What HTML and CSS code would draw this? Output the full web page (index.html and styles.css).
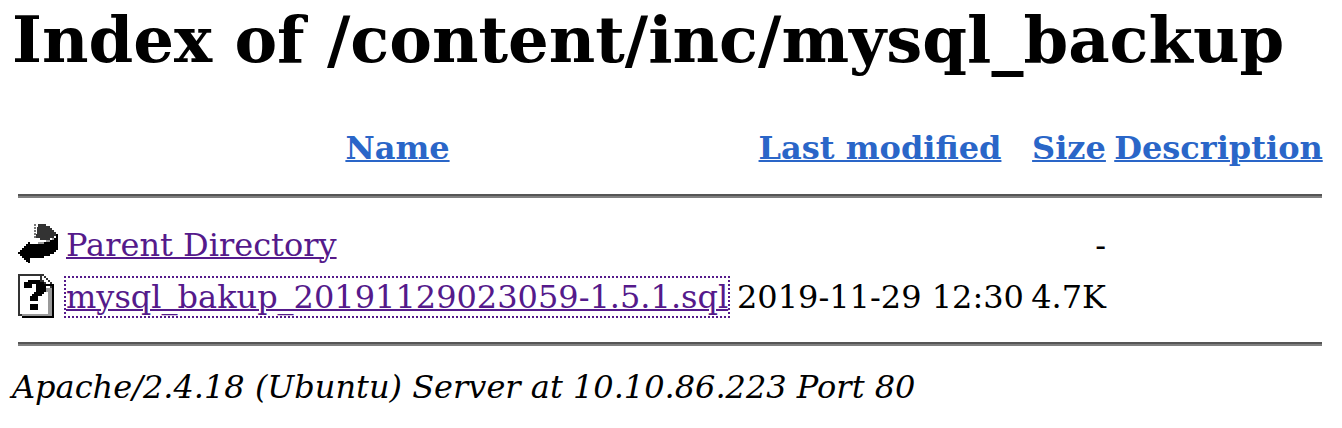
FILE: index.html
```html
<!DOCTYPE html>
<html lang="en">
<head>
<meta charset="utf-8">
<title>Index of /content/inc/mysql_backup</title>
<link rel="stylesheet" href="styles.css">
</head>
<body>
<h1 class="title">Index of /content/inc/mysql_backup</h1>
<table class="listing">
<colgroup><col class="c-icon"><col class="c-name"><col class="c-date"><col class="c-size"><col class="c-desc"></colgroup>
<tr class="head"><th></th><th><a href="#">Name</a></th><th><a href="#">Last modified</a></th><th><a href="#">Size</a></th><th><a href="#">Description</a></th></tr>
<tr class="rule"><td colspan="5"><hr></td></tr>
<tr class="row"><td><svg class="icon" width="40" height="44" viewBox="0 0 20 22" shape-rendering="crispEdges"><path fill="#333" d="M10 1h4v1h2v1h1v1h1v1h1v1h1v1h-2v1h-2v1h-5v-1h-2z"/><path stroke="#777" stroke-dasharray="1 .5" d="M8.5 1v7"/><path fill="#999" d="M10 11v-1h3v1zM14 10V9h2v1zM17 8h1v1h-1zM20 13v1h-1v1h-2v1h-2v1h-3v1h-3v-1h3v-1h3v-1h2v-1h1z"/><path fill="#000" d="M20 6v8h-1v1h-1v1h-2v1h-3v1H6v2.500H5V20H4v-1H3v-1H2v-1H1v-1H0v-1h1v-1h1v-1h1v-1h1v-1h1v-1h1v1h7v-1h3V9h2V8h1V6z"/></svg></td><td><a class="visited" href="#">Parent Directory</a></td><td></td><td class="size">-</td><td></td></tr>
<tr class="row"><td><svg class="icon" width="40" height="44" viewBox="0 0 20 22" shape-rendering="crispEdges"><path fill="#333" d="M0 0h13v1h1v1h1v1h1v1h1v1h1v17H2v-1H0z"/><path fill="#fff" d="M1 1h10v5h5v14H1z"/><path fill="#999" d="M14 7h3v14H2v-1h13V9h-1z"/><path fill="#fff" d="M12 1h1v1h1v1h1v1h1v1h-2V4h-1V3h-1z"/><path fill="#000" d="M17 5h1v17H2v-1h15zM12 4h1v1h4v1h-5z"/><path fill="#000" d="M5 3h6v1h2v1h1v4h-1v1h-1v1h-2v2.500H6V11h1v-1h1V9h1V5H7v2H3V4h2zM6 15h4v3H6z"/></svg></td><td><a class="visited focused" href="#">mysql_bakup_20191129023059-1.5.1.sql</a></td><td>2019-11-29 12:30</td><td class="size">4.7K</td><td></td></tr>
<tr class="rule last"><td colspan="5"><hr></td></tr>
</table>
<address class="server">Apache/2.4.18 (Ubuntu) Server at 10.10.86.223 Port 80</address>
</body>
</html>
```
FILE: styles.css
```css
body { margin: 0; background: #fff; color: #000; font: 32px/38px "DejaVu Serif", serif; overflow: hidden; }
.title { margin: 2px 0 46px 12px; font-size: 64px; line-height: 76px; white-space: nowrap; }
.listing { width: 1312px; margin-left: 14px; table-layout: fixed; border-collapse: collapse; white-space: nowrap; }
.listing th, .listing td { padding: 0; }
.listing th:nth-child(2), .listing th:nth-child(3) { padding-right: 8px; }
.c-icon { width: 52px; }
.c-name { width: 671px; }
.c-date { width: 294px; }
.c-size { width: 76px; }
.c-desc { width: 219px; }
.head { height: 48px; }
.head a { color: #2a66c8; }
.listing .head th:last-child { padding-right: 3px; padding-left: 7px; }
.rule { height: 47px; vertical-align: top; }
.listing .rule td { padding-top: 22px; }
.rule.last { height: 45px; }
.listing .rule.last td { padding-top: 19px; }
.rule hr { height: 4px; margin: 0 4px; border: 0; background: linear-gradient(#555 50%, #808080 50%); }
.row { height: 52px; }
.icon { display: block; margin: 0 0 2px 4px; }
.listing .size { text-align: right; padding-right: 1px; }
.listing a { text-decoration: underline; text-decoration-thickness: 2px; }
.listing .visited { color: #551a8b; }
.focused { outline: 2px dotted #551a8b; }
.server { margin-left: 12px; }
```
